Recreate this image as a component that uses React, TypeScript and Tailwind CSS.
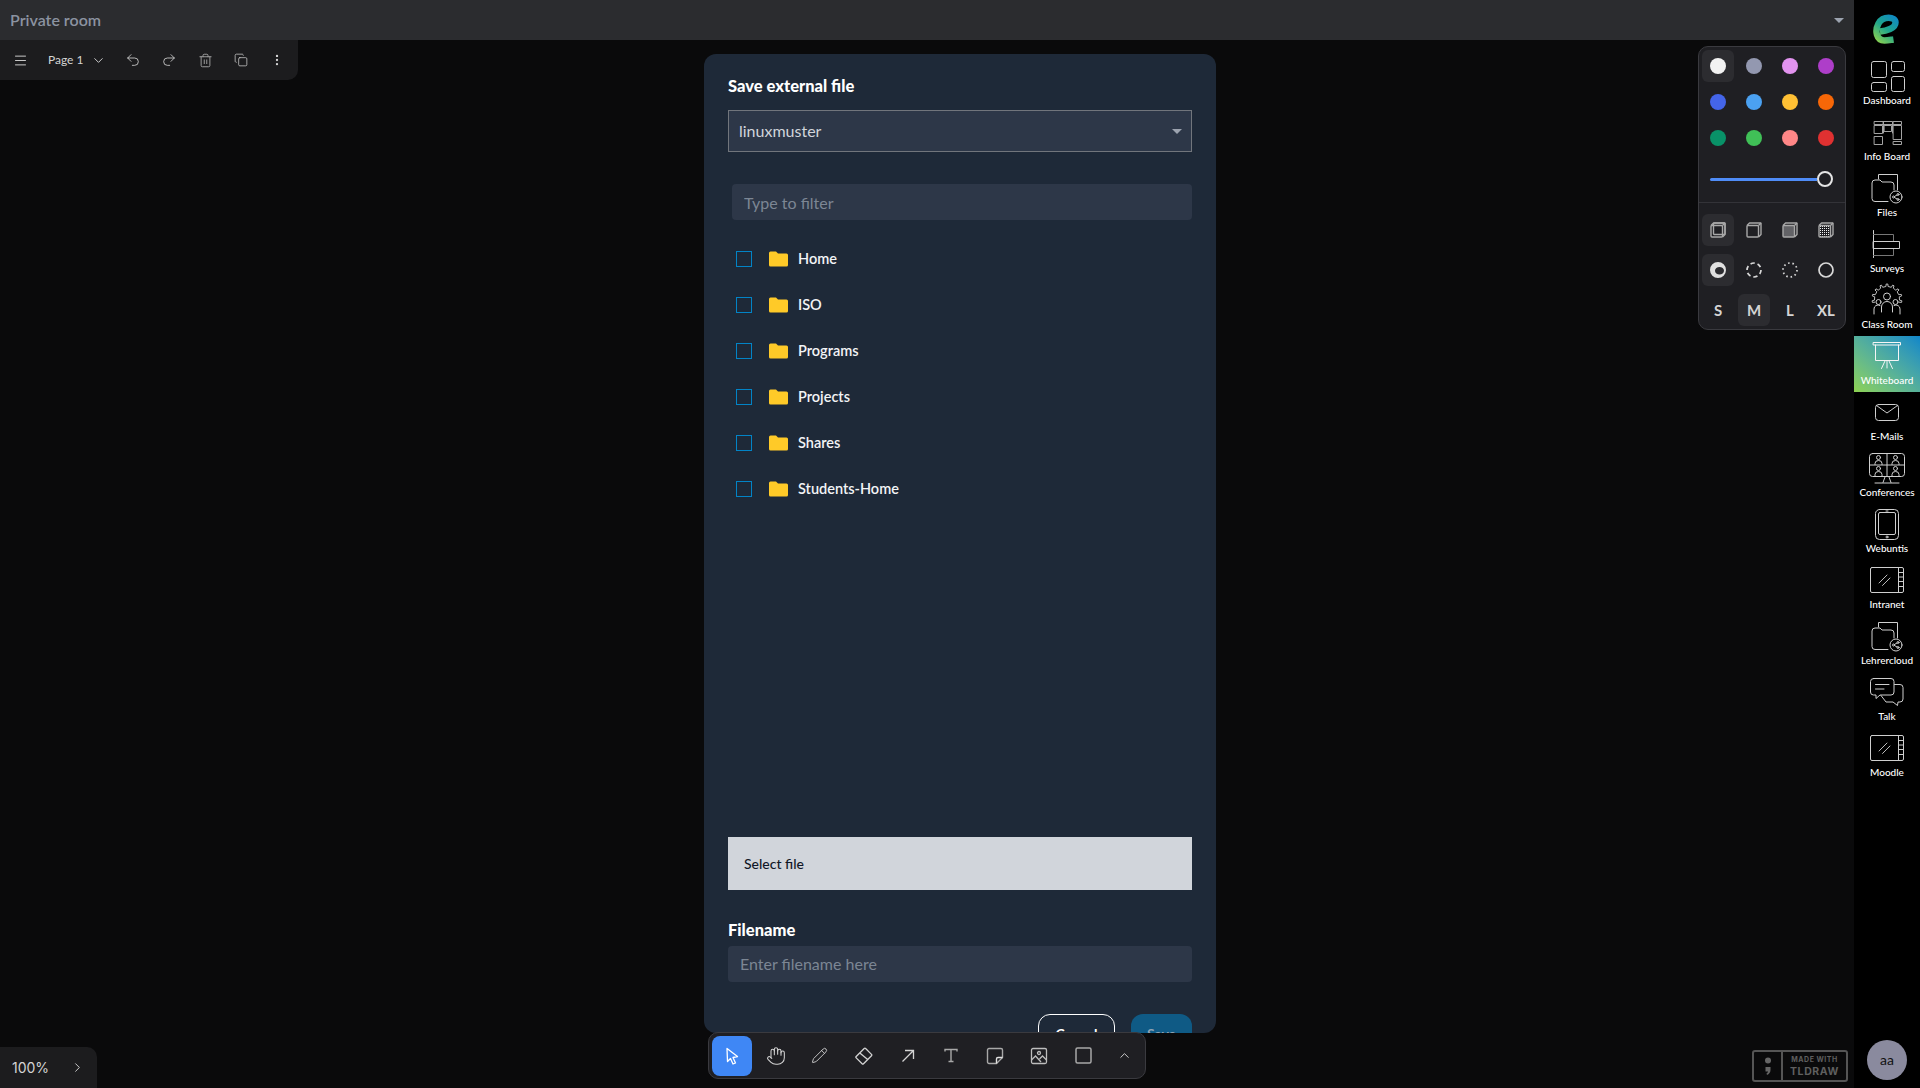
import type { ReactNode } from 'react';
import {
  ChevronDown,
  ChevronRight,
  ChevronUp,
  Copy,
  Hand,
  Menu,
  MoreVertical,
  Pencil,
  Redo2,
  Trash2,
  Undo2,
} from 'lucide-react';

function Icon36({ children }: { children: ReactNode }) {
  return (
    <svg width="36" height="36" viewBox="0 0 36 36" fill="none" stroke="#cfcfcf" strokeWidth="1" strokeLinejoin="round" strokeLinecap="round" className="shrink-0">
      {children}
    </svg>
  );
}

function gearPath() {
  const cx = 18;
  const cy = 17;
  const pts: string[] = [];
  const teeth = 8;
  for (let i = 0; i <= teeth; i++) {
    const base = 170 + i * (200 / teeth);
    const steps: [number, number][] = [
      [base - 5, 12.5],
      [base - 3, 15],
      [base + 3, 15],
      [base + 5, 12.5],
    ];
    steps.forEach(([a, r]) => {
      const t = (a * Math.PI) / 180;
      pts.push(`${(cx + r * Math.cos(t)).toFixed(1)} ${(cy + r * Math.sin(t)).toFixed(1)}`);
    });
  }
  return 'M' + pts.join(' L');
}

const DashboardIcon = () => (
  <Icon36>
    <rect x="2.5" y="3.5" width="15" height="16" rx="2" />
    <rect x="22.5" y="3.5" width="13" height="10" rx="2" />
    <rect x="2.5" y="24.5" width="15" height="9" rx="2" />
    <rect x="22.5" y="18.5" width="13" height="15" rx="2" />
  </Icon36>
);

const InfoBoardIcon = () => (
  <Icon36>
    <g stroke="#a3a3a3">
      <rect x="5.5" y="7.5" width="9" height="3" />
      <rect x="14.5" y="7.5" width="9" height="3" />
      <rect x="24.5" y="7.5" width="8" height="3" />
      <rect x="5.5" y="11.5" width="8" height="8" />
      <rect x="5.5" y="22.5" width="8" height="8" />
      <rect x="15.5" y="11.5" width="7" height="6" />
      <rect x="24.5" y="11.5" width="8" height="14" />
      <rect x="24.5" y="27.5" width="8" height="3" />
      <path d="M14.5 10.5V19M23.5 10.5V19" />
    </g>
  </Icon36>
);

const FilesIcon = () => (
  <Icon36>
    <path d="M9.5 9V4.5H28.5V20" />
    <path d="M19 31.5H6a3 3 0 0 1-3-3V13a3 3 0 0 1 3-3h5l2 2h9a3 3 0 0 1 3 3v5" />
    <circle cx="27" cy="27" r="6" />
    <circle cx="24.5" cy="27" r="1" />
    <circle cx="29" cy="24.5" r="1" />
    <circle cx="29" cy="29.5" r="1" />
    <path d="M25.5 26.5L28 25M25.5 27.5L28 29" />
  </Icon36>
);

const SurveysIcon = () => (
  <Icon36>
    <path d="M4.5 4.5V31.5" />
    <path d="M4.5 8.5H24.5V15M4.5 29.5H24.5V22.5" stroke="#777" />
    <rect x="4.5" y="15.5" width="26" height="7" />
  </Icon36>
);

const ClassRoomIcon = () => (
  <Icon36>
    <path d={gearPath()} stroke="#bdbdbd" />
    <circle cx="18" cy="14.5" r="3.5" />
    <path d="M12.5 30v-5a5.5 5.5 0 0 1 11 0v5" />
    <circle cx="9.5" cy="20" r="2.5" />
    <circle cx="26.5" cy="20" r="2.5" />
    <path d="M5 32v-5a4 4 0 0 1 6-3.5M31 32v-5a4 4 0 0 0-6-3.5" />
  </Icon36>
);

const WhiteboardIcon = () => (
  <Icon36>
    <rect x="4.5" y="4.5" width="27" height="2.5" stroke="#f5f5f5" />
    <path d="M6.5 7V22.5H29.5V7" stroke="#f5f5f5" />
    <path d="M18 23V30M16 23L12.5 30.5M20 23L23.5 30.5" stroke="#f5f5f5" />
  </Icon36>
);

const MailIcon = () => (
  <Icon36>
    <rect x="6.5" y="10.5" width="23" height="16" rx="3" />
    <path d="M7.5 11.5L18 19L28.5 11.5" />
  </Icon36>
);

const ConferenceIcon = () => (
  <Icon36>
    <rect x="0.5" y="3.5" width="35" height="23" rx="3" />
    <path d="M18 3.5V26.5M0.5 15H35.5" />
    <circle cx="9.5" cy="7.5" r="2" />
    <path d="M6 14.5v-1a3.5 3 0 0 1 7 0v1" />
    <circle cx="26.5" cy="7.5" r="2" />
    <path d="M23 14.5v-1a3.5 3 0 0 1 7 0v1" />
    <circle cx="9.5" cy="18.5" r="2" />
    <path d="M6 26v-1.500a3.500 3 0 0 1 7 0V26" />
    <circle cx="26.5" cy="18.5" r="2" />
    <path d="M23 26v-1.500a3.500 3 0 0 1 7 0V26" />
    <path d="M16 27L14 32.500M20 27L22 32.500M6 33H30" />
  </Icon36>
);

const TabletIcon = () => (
  <Icon36>
    <rect x="6.5" y="3.500" width="23" height="30" rx="4" />
    <rect x="9.500" y="6.500" width="17" height="22" rx="1.500" />
    <path d="M17 5H19" />
    <circle cx="18" cy="31" r="1" />
  </Icon36>
);

const BrowserIcon = () => (
  <Icon36>
    <rect x="1.500" y="5.500" width="33" height="25" rx="1.500" />
    <path d="M29.500 5.500V30.500M29.500 10.500H34.500M29.500 15H34.500M29.500 19.500H34.500M29.500 24.500H34.500" />
    <path d="M10 21L18 13M13.500 23.500L21 16" stroke="#bdbdbd" />
  </Icon36>
);

const TalkIcon = () => (
  <Icon36>
    <path d="M4.500 4.500H22a3 3 0 0 1 3 3V18a3 3 0 0 1-3 3H11l-4 3.500V21H4.500a3 3 0 0 1-3-3V7.500a3 3 0 0 1 3-3Z" />
    <path d="M25.500 10.500H31a3 3 0 0 1 3 3V25a3 3 0 0 1-3 3h-2l-.5 3.500L24 28H17l-5-6.500" />
    <path d="M6.500 10.500H20M6.500 15H15" />
  </Icon36>
);

function LogoMark() {
  return (
    <svg width="28" height="32" viewBox="0 0 28 32" fill="none">
      <defs>
        <linearGradient id="logoGrad" x1="25" y1="3" x2="4" y2="29" gradientUnits="userSpaceOnUse">
          <stop offset="0" stopColor="#0e86c9" />
          <stop offset="0.5" stopColor="#1fa58c" />
          <stop offset="1" stopColor="#8ed24e" />
        </linearGradient>
      </defs>
      <path d="M8 18.500C14 18 23.500 15.500 23.500 9.500C23.500 3.500 11 2.500 6.500 10.500C2.500 18 4.500 27.500 12.500 27.500C15.500 27.500 18 27 21.500 26.500" stroke="url(#logoGrad)" strokeWidth="6.500" strokeLinecap="butt" />
    </svg>
  );
}

const navItems: { label: string; icon: ReactNode; active?: boolean }[] = [
  { label: 'Dashboard', icon: <DashboardIcon /> },
  { label: 'Info Board', icon: <InfoBoardIcon /> },
  { label: 'Files', icon: <FilesIcon /> },
  { label: 'Surveys', icon: <SurveysIcon /> },
  { label: 'Class Room', icon: <ClassRoomIcon /> },
  { label: 'Whiteboard', icon: <WhiteboardIcon />, active: true },
  { label: 'E-Mails', icon: <MailIcon /> },
  { label: 'Conferences', icon: <ConferenceIcon /> },
  { label: 'Webuntis', icon: <TabletIcon /> },
  { label: 'Intranet', icon: <BrowserIcon /> },
  { label: 'Lehrercloud', icon: <FilesIcon /> },
  { label: 'Talk', icon: <TalkIcon /> },
  { label: 'Moodle', icon: <BrowserIcon /> },
];

function Sidebar() {
  return (
    <aside className="flex w-[66px] shrink-0 flex-col items-center bg-black pb-2">
      <div className="flex h-14 w-full items-start justify-center pt-[13px] pr-[2px]">
        <LogoMark />
      </div>
      {navItems.map(item => (
        <div
          key={item.label}
          className={`flex h-14 w-full flex-col items-center pt-[2px] ${item.active ? 'bg-gradient-to-tr from-[#8ed24e] to-[#0e86c9]' : ''}`}
        >
          {item.icon}
          <span className="whitespace-nowrap text-[10px] font-medium leading-3 text-white">{item.label}</span>
        </div>
      ))}
      <div className="mt-auto flex h-10 w-10 items-center justify-center rounded-full bg-[#8a8a9e] text-sm text-[#111]">aa</div>
    </aside>
  );
}

function PageMenu() {
  return (
    <div className="absolute left-0 top-0 flex h-10 w-[298px] items-center rounded-br-[10px] bg-[#1c1c1e] text-[#d4d4d4]">
      <div className="flex w-10 justify-center"><Menu size={15} strokeWidth={1.5} /></div>
      <span className="ml-2 w-[38px] whitespace-nowrap text-xs">Page 1</span>
      <div className="flex w-[24px] justify-center"><ChevronDown size={15} strokeWidth={1.5} /></div>
      <div className="ml-[5px] flex w-9 justify-center"><Undo2 size={16} strokeWidth={1.25} /></div>
      <div className="flex w-9 justify-center"><Redo2 size={16} strokeWidth={1.25} /></div>
      <div className="flex w-9 justify-center text-[#a3a3a3]"><Trash2 size={15} strokeWidth={1.5} /></div>
      <div className="flex w-9 justify-center"><Copy size={14} strokeWidth={1.25} /></div>
      <div className="flex w-9 justify-center"><MoreVertical size={14} strokeWidth={2} /></div>
    </div>
  );
}

const colors = ['#f2f2f2', '#9398b0', '#e293ef', '#ae3ec9', '#4465e9', '#4ba1f1', '#ffc034', '#f76707', '#099268', '#40c057', '#ff8787', '#e03131'];

function Cell({ active, children }: { active?: boolean; children: ReactNode }) {
  return (
    <div className="flex h-9 items-center justify-center">
      <div className={`flex h-8 w-8 items-center justify-center rounded-md ${active ? 'bg-[#2c2c30]' : ''}`}>{children}</div>
    </div>
  );
}

function FillIcon({ kind }: { kind: 'none' | 'semi' | 'solid' | 'pattern' }) {
  return (
    <svg width="16" height="16" viewBox="0 0 16 16" fill="none" stroke="#a8a8a8" strokeWidth="1.400" strokeLinejoin="round">
      {kind === 'pattern' && (
        <defs>
          <pattern id="fillDots" width="2" height="2" patternUnits="userSpaceOnUse">
            <rect width="1" height="1" fill="#f0f0f0" stroke="none" />
          </pattern>
        </defs>
      )}
      <path d="M1 3.500L3.500 1H14.500a.5 .5 0 0 1 .5 .5V12.500L12.500 15" />
      <path d="M12.500 3.500L15 1" />
      <rect
        x="1"
        y="3.500"
        width="11.500"
        height="11.500"
        rx="1"
        fill={kind === 'solid' ? '#626266' : kind === 'pattern' ? 'url(#fillDots)' : '#1f1f23'}
      />
      {kind === 'none' && <rect x="3.500" y="1" width="11.500" height="11.500" rx="1" />}
    </svg>
  );
}

function DashIcon({ kind }: { kind: 'draw' | 'dashed' | 'dotted' | 'solid' }) {
  if (kind === 'draw') {
    return (
      <svg width="16" height="16" viewBox="0 0 16 16" fill="none">
        <path fillRule="evenodd" d="M8 0a8 8 0 1 1 0 16a8 8 0 1 1 0-16ZM9.500 5a4.500 3.800 0 1 0 0 7.600a4.500 3.800 0 1 0 0-7.600Z" fill="#e0e0e0" />
      </svg>
    );
  }
  const dash = kind === 'dashed' ? '4.300 3' : kind === 'dotted' ? '1.600 2.800' : undefined;
  return (
    <svg width="16" height="16" viewBox="0 0 16 16" fill="none">
      <circle cx="8" cy="8" r="7" stroke="#d8d8d8" strokeWidth="1.700" strokeDasharray={dash} />
    </svg>
  );
}

function StylePanel() {
  return (
    <div className="absolute left-[1698px] top-[6px] w-[148px] rounded-[10px] border border-[#3a3a3f] bg-[#1f1f23] px-[1px] pt-[1px]">
      <div className="grid grid-cols-4">
        {colors.map((c, i) => (
          <Cell key={c} active={i === 0}>
            <div className="h-4 w-4 rounded-full" style={{ backgroundColor: c }} />
          </Cell>
        ))}
      </div>
      <div className="flex h-[46px] items-center pl-[10px] pr-[11px]">
        <div className="h-[3px] flex-1 rounded-l-full bg-[#4f8cf7]" />
        <div className="h-4 w-4 rounded-full border-2 border-[#e5e5e5] bg-[#1f1f23]" />
      </div>
      <div className="-mx-[1px] h-px bg-[#333338]" />
      <div className="mt-[9px] flex flex-col gap-1 pb-[1px]">
        <div className="grid grid-cols-4">
          <Cell active><FillIcon kind="none" /></Cell>
          <Cell><FillIcon kind="semi" /></Cell>
          <Cell><FillIcon kind="solid" /></Cell>
          <Cell><FillIcon kind="pattern" /></Cell>
        </div>
        <div className="grid grid-cols-4">
          <Cell active><DashIcon kind="draw" /></Cell>
          <Cell><DashIcon kind="dashed" /></Cell>
          <Cell><DashIcon kind="dotted" /></Cell>
          <Cell><DashIcon kind="solid" /></Cell>
        </div>
        <div className="grid grid-cols-4 text-[15px] font-bold text-[#d4d4d4]">
          <Cell>S</Cell>
          <Cell active>M</Cell>
          <Cell>L</Cell>
          <Cell>XL</Cell>
        </div>
      </div>
    </div>
  );
}

function FolderIcon() {
  return (
    <svg width="19" height="16" viewBox="0 0 19 16" className="shrink-0">
      <path d="M1.500 0.500H7L9 2.500H17.500a1.500 1.500 0 0 1 1.500 1.500V14a1.500 1.500 0 0 1-1.500 1.500H1.500A1.500 1.500 0 0 1 0 14V2A1.500 1.500 0 0 1 1.500 0.500Z" fill="#ffca28" />
    </svg>
  );
}

const folders = ['Home', 'ISO', 'Programs', 'Projects', 'Shares', 'Students-Home'];

function SaveDialog() {
  return (
    <div className="absolute left-[704px] top-[14px] h-[979px] w-[512px] overflow-hidden rounded-xl bg-[#1e2938] px-6 pt-[18px]">
      <h2 className="text-[16.500px] font-black leading-7 text-white">Save external file</h2>
      <div className="mt-[10px] flex h-[42px] items-center justify-between border border-[#71757c] bg-[#2d3748] pl-[10px] pr-[9px] text-base text-[#d1d5db]">
        <span>linuxmuster</span>
        <span className="h-0 w-0 border-x-[5px] border-t-[5px] border-x-transparent border-t-[#9ca3af]" />
      </div>
      <input
        placeholder="Type to filter"
        className="mt-8 ml-1 block h-9 w-[460px] rounded bg-[#2d3748] px-3 text-base outline-none placeholder:text-[#7c8694]"
      />
      <ul className="mt-4 h-[601px]">
        {folders.map(name => (
          <li key={name} className="flex h-[46px] items-center pl-2">
            <span className="h-4 w-4 shrink-0 border border-[#0284c7]" />
            <span className="ml-[17px]"><FolderIcon /></span>
            <span className="ml-[10px] text-[14.500px] font-semibold text-[#f3f4f6]">{name}</span>
          </li>
        ))}
      </ul>
      <div className="flex h-[53px] items-center bg-[#d1d5db] px-4 text-sm font-medium text-[#111827]">Select file</div>
      <label className="mt-7 block text-[16.500px] font-black leading-6 text-white">Filename</label>
      <input
        placeholder="Enter filename here"
        className="mt-1 block h-9 w-full rounded bg-[#2d3748] px-3 pb-[2px] text-base outline-none placeholder:text-[#7c8694]"
      />
      <div className="mt-8 flex justify-end gap-4">
        <button className="h-10 w-[77px] rounded-xl border border-white text-sm font-bold text-white">Cancel</button>
        <button className="h-10 w-[61px] rounded-xl bg-[#0f5a85] text-sm font-bold text-[#8fa3b3]">Save</button>
      </div>
    </div>
  );
}

function SelectIcon() {
  return (
    <svg width="20" height="20" viewBox="0 0 20 20" fill="none" stroke="#fff" strokeWidth="1.300" strokeLinejoin="round">
      <path d="M5 2.500L15.500 10.500L11 11.500L13.500 17L11 18L8.500 12.500L5.500 15.500Z" />
    </svg>
  );
}

function EraserIcon() {
  return (
    <svg width="18" height="18" viewBox="0 0 18 18" fill="none" stroke="#d4d4d4" strokeWidth="1.300" strokeLinejoin="round">
      <path d="M1.200 9.500L9.200 1.500a1 1 0 0 1 1.400 0L16.500 7.400a1 1 0 0 1 0 1.400L8.500 16.800a1 1 0 0 1-1.400 0L1.200 10.900a1 1 0 0 1 0-1.400Z" />
      <path d="M4.800 5.900L12.700 12.600" />
    </svg>
  );
}

function ArrowToolIcon() {
  return (
    <svg width="14" height="14" viewBox="0 0 14 14" fill="none" stroke="#d4d4d4" strokeWidth="1.300">
      <path d="M1.500 12.500L12.500 1.500M4 1.500H12.500V10" />
    </svg>
  );
}

function TextToolIcon() {
  return (
    <svg width="14" height="15" viewBox="0 0 14 15" fill="none" stroke="#a8a8a8" strokeWidth="1.400">
      <path d="M1 3.500V1.500H13V3.500M7 1.500V13.500M4.500 13.500H9.500" />
    </svg>
  );
}

function NoteToolIcon() {
  return (
    <svg width="18" height="18" viewBox="0 0 18 18" fill="none" stroke="#a8a8a8" strokeWidth="1.400" strokeLinejoin="round">
      <path d="M3 1.500H15a1.500 1.500 0 0 1 1.500 1.500V10.500L10.500 16.500H3A1.500 1.500 0 0 1 1.500 15V3A1.500 1.500 0 0 1 3 1.500Z" />
      <path d="M16.500 10.500H12a1.500 1.500 0 0 0-1.500 1.500V16.500" stroke="#e0e0e0" />
    </svg>
  );
}

function ImageToolIcon() {
  return (
    <svg width="18" height="18" viewBox="0 0 18 18" fill="none" stroke="#bdbdbd" strokeWidth="1.300">
      <rect x="1.500" y="1.500" width="15" height="15" rx="1.500" />
      <circle cx="9" cy="6" r="1.500" />
      <path d="M1.500 13L5.500 9L11 15M9.500 12L12.500 9L16.500 13" />
    </svg>
  );
}

function SquareToolIcon() {
  return (
    <svg width="17" height="17" viewBox="0 0 17 17" fill="none" stroke="#a8a8a8" strokeWidth="1.500">
      <rect x="1" y="1" width="15" height="15" rx="1.500" />
    </svg>
  );
}

function BottomToolbar() {
  const c = 'flex w-11 justify-center';
  return (
    <div className="absolute left-[708px] top-[992px] flex h-[47px] w-[438px] items-center rounded-[10px] border border-[#3a3a3f] bg-[#1f1f23] pl-[3px] text-[#d4d4d4]">
      <div className="mr-[2px] flex h-10 w-10 items-center justify-center rounded-lg bg-[#3f87f5]"><SelectIcon /></div>
      <div className={c}><Hand size={20} strokeWidth={1.25} /></div>
      <div className={c}><Pencil size={17} strokeWidth={1.25} /></div>
      <div className={c}><EraserIcon /></div>
      <div className={c}><ArrowToolIcon /></div>
      <div className={c}><TextToolIcon /></div>
      <div className={c}><NoteToolIcon /></div>
      <div className={c}><ImageToolIcon /></div>
      <div className={c}><SquareToolIcon /></div>
      <div className="flex w-10 justify-center"><ChevronUp size={15} strokeWidth={1.5} /></div>
    </div>
  );
}

function Watermark() {
  return (
    <div className="absolute left-[1752px] top-[1010px] flex h-8 w-24 rounded-[3px] border-2 border-[#555] text-[#5f5f5f]">
      <div className="flex w-[29px] items-center justify-center border-r-2 border-[#555]">
        <svg width="8" height="18" viewBox="0 0 8 18" fill="#666">
          <circle cx="4" cy="3.500" r="3" />
          <path d="M1.500 10H6.500V13C6.500 15.500 5 17 3 18L2.500 16.500C3.500 16 4 15.300 4 14.500H1.500Z" />
        </svg>
      </div>
      <div className="flex flex-1 flex-col items-center justify-center font-[Inter,sans-serif] font-bold">
        <span className="whitespace-nowrap text-[7px] leading-[10px] tracking-[0.5px]">MADE WITH</span>
        <span className="whitespace-nowrap text-[10.500px] leading-[13px] tracking-[0.6px]">TLDRAW</span>
      </div>
    </div>
  );
}

export default function App() {
  return (
    <div className="flex h-[1088px] w-[1920px] overflow-hidden bg-black font-[Lato,sans-serif]">
      <div className="flex min-w-0 flex-1 flex-col">
        <header className="flex h-10 shrink-0 items-center justify-between bg-[#2b2c2f] pl-[10px] pr-[10px]">
          <span className="text-base font-semibold text-[#8b93a1]">Private room</span>
          <span className="h-0 w-0 border-x-[5px] border-t-[5px] border-x-transparent border-t-[#9ca3af]" />
        </header>
        <main className="relative flex-1 bg-[#0a0a0b]">
          <PageMenu />
          <SaveDialog />
          <StylePanel />
          <BottomToolbar />
          <Watermark />
          <div className="absolute bottom-0 left-0 flex h-[41px] w-[97px] items-center rounded-tr-[10px] bg-[#1c1c1e] pl-3 font-[Inter,sans-serif] text-sm text-[#d4d4d4]">
            <span>100%</span>
            <ChevronRight size={15} strokeWidth={1.5} className="ml-[21px]" />
          </div>
        </main>
      </div>
      <Sidebar />
    </div>
  );
}
